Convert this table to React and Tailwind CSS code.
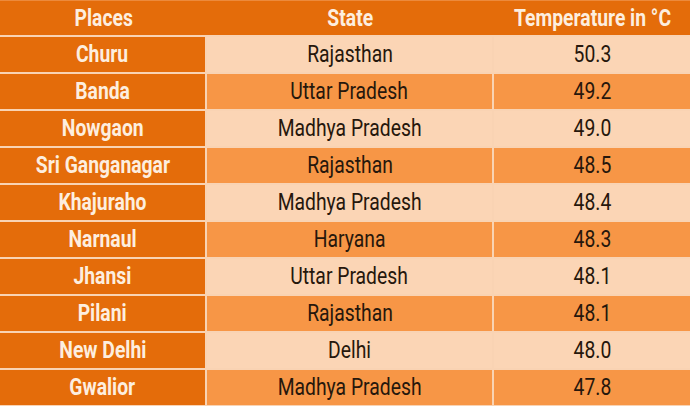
const rows = [
  { place: "Churu", state: "Rajasthan", temp: "50.3" },
  { place: "Banda", state: "Uttar Pradesh", temp: "49.2" },
  { place: "Nowgaon", state: "Madhya Pradesh", temp: "49.0" },
  { place: "Sri Ganganagar", state: "Rajasthan", temp: "48.5" },
  { place: "Khajuraho", state: "Madhya Pradesh", temp: "48.4" },
  { place: "Narnaul", state: "Haryana", temp: "48.3" },
  { place: "Jhansi", state: "Uttar Pradesh", temp: "48.1" },
  { place: "Pilani", state: "Rajasthan", temp: "48.1" },
  { place: "New Delhi", state: "Delhi", temp: "48.0" },
  { place: "Gwalior", state: "Madhya Pradesh", temp: "47.8" },
];

function Txt({ children }) {
  return <span className="inline-block whitespace-nowrap scale-x-[0.84]">{children}</span>;
}

export default function App() {
  return (
    <div className="w-[690px] h-[406px] overflow-hidden bg-[#f9d3b3] font-['Roboto',sans-serif] text-[23px] leading-none">
      <div className="flex h-[35px] items-center bg-[#e46c0a] border-t border-[#ec8a3c] font-bold text-[#fdeedf]">
        <div className="w-[207px] text-center"><Txt>Places</Txt></div>
        <div className="w-[287px] text-center"><Txt>State</Txt></div>
        <div className="flex-1 text-center"><Txt>Temperature in °C</Txt></div>
      </div>
      {rows.map((r, i) => (
        <div key={r.place} className="mt-[2px] flex h-[35px] gap-[2px]">
          <div className="flex w-[205px] items-center justify-center bg-[#e46c0a] font-bold text-[#fdeedf]">
            <Txt>{r.place}</Txt>
          </div>
          <div
            className={
              "flex w-[285px] items-center justify-center text-[#26170c] " +
              (i % 2 === 0 ? "bg-[#fbd5b5]" : "bg-[#f79646]")
            }
          >
            <Txt>{r.state}</Txt>
          </div>
          <div
            className={
              "flex flex-1 items-center justify-center text-[#26170c] " +
              (i % 2 === 0 ? "bg-[#fbd5b5]" : "bg-[#f79646]")
            }
          >
            <Txt>{r.temp}</Txt>
          </div>
        </div>
      ))}
    </div>
  );
}
